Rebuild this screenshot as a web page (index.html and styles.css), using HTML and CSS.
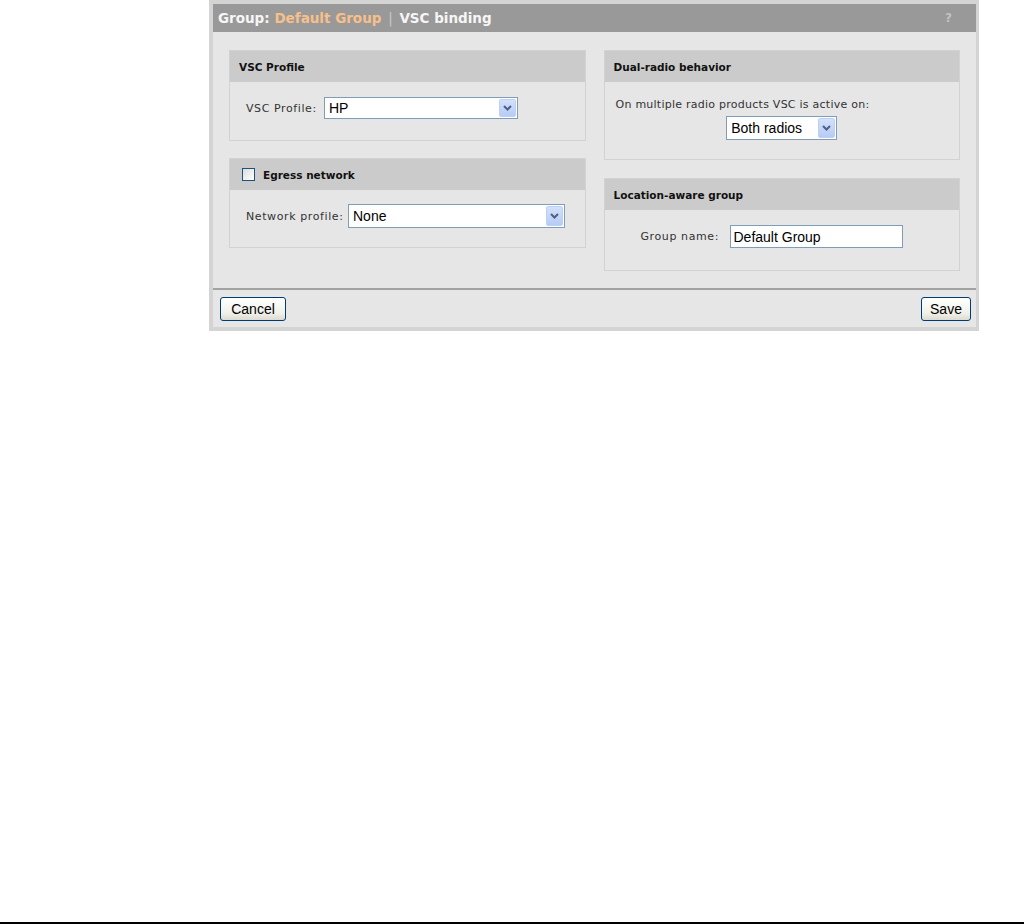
FILE: index.html
```html
<!DOCTYPE html>
<html lang="en">
  <head>
    <meta charset="UTF-8" />
    <title>VSC binding</title>
    <link rel="stylesheet" href="styles.css">
  </head>
  <body>
    <div class="page">
      <div class="panel">
        <div class="titlebar">
          <span class="title">Group: <span class="group">Default Group</span> <span class="sep">|</span> VSC binding</span>
          <span class="help">?</span>
        </div>
        <div class="content">
          <div class="column col_left">
            <div class="box box_vsc">
              <div class="box_head">VSC Profile</div>
              <div class="box_body row">
                <label class="lbl lbl_vsc">VSC Profile:</label>
                <div class="select sel_hp">
                  <span class="sel_text">HP</span>
                  <span class="arrow"><svg width="9" height="6" viewBox="0 0 9 6"><path d="M1 1 L4.5 4.5 L8 1" fill="none" stroke="#4d6185" stroke-width="2"/></svg></span>
                </div>
              </div>
            </div>
            <div class="box box_egress">
              <div class="box_head"><span class="check"></span>Egress network</div>
              <div class="box_body row">
                <label class="lbl lbl_net">Network profile:</label>
                <div class="select sel_none">
                  <span class="sel_text">None</span>
                  <span class="arrow"><svg width="9" height="6" viewBox="0 0 9 6"><path d="M1 1 L4.5 4.5 L8 1" fill="none" stroke="#4d6185" stroke-width="2"/></svg></span>
                </div>
              </div>
            </div>
          </div>
          <div class="column col_right">
            <div class="box box_dual">
              <div class="box_head">Dual-radio behavior</div>
              <div class="box_body">
                <div class="dual_text">On multiple radio products VSC is active on:</div>
                <div class="center">
                  <div class="select sel_both">
                    <span class="sel_text">Both radios</span>
                    <span class="arrow"><svg width="9" height="6" viewBox="0 0 9 6"><path d="M1 1 L4.5 4.5 L8 1" fill="none" stroke="#4d6185" stroke-width="2"/></svg></span>
                  </div>
                </div>
              </div>
            </div>
            <div class="box box_loc">
              <div class="box_head">Location-aware group</div>
              <div class="box_body row">
                <label class="lbl lbl_group">Group name:</label>
                <input type="text" class="text_in" value="Default Group">
              </div>
            </div>
          </div>
        </div>
        <div class="footer">
          <button class="btn btn_cancel">Cancel</button>
          <button class="btn btn_save">Save</button>
        </div>
      </div>
    </div>
    <div class="bottom_line"></div>
  </body>
</html>
```
FILE: styles.css
```css
*{
    margin: 0;
    padding: 0;
    box-sizing: border-box;
}
body{
    width: 1024px;
    height: 924px;
    background: #fff;
    font-family: "DejaVu Sans", Verdana, sans-serif;
    display: flex;
    flex-direction: column;
}
.page{
    flex: 1;
    padding-left: 209px;
}
.panel{
    width: 770px;
    border: 4px solid #d4d4d4;
    border-right-width: 3px;
    background-color: #e6e6e6;
}
.titlebar{
    height: 28px;
    background-color: #999;
    display: flex;
    align-items: center;
    justify-content: space-between;
    padding: 0 24px 0 5px;
    color: #f6f6f6;
    font-weight: bold;
    font-size: 13.5px;
}
.group{
    color: #f7c08a;
}
.sep{
    color: #c8c8c8;
    font-weight: normal;
    padding: 0 2px;
}
.help{
    color: #c2c2c2;
    font-size: 12px;
}
.content{
    display: flex;
    gap: 18px;
    padding: 18px 16px 17px 16px;
}
.column{
    flex: 1;
    display: flex;
    flex-direction: column;
}
.col_left{
    gap: 17px;
}
.col_right{
    gap: 18px;
}
.box{
    border: 1px solid #d2d2d2;
}
.box_head{
    height: 31px;
    background-color: #cbcbcb;
    display: flex;
    align-items: center;
    padding-left: 9px;
    font-size: 10.5px;
    font-weight: bold;
    color: #111;
}
.box_body{
    font-size: 11px;
    color: #333;
}
.row{
    display: flex;
    align-items: center;
}
.lbl{
    letter-spacing: 0.6px;
    flex-shrink: 0;
}
.lbl_vsc{
    width: 78px;
}
.lbl_net{
    width: 102px;
}
.lbl_group{
    width: 89px;
}
.box_vsc .box_body{
    padding: 15px 0 21px 16px;
}
.box_egress .box_body{
    padding: 14px 0 19px 16px;
}
.box_dual .box_body{
    padding: 16px 0 19px 11px;
}
.dual_text{
    line-height: 13px;
    letter-spacing: 0.25px;
}
.center{
    display: flex;
    justify-content: center;
    margin-top: 5px;
    padding-right: 11px;
}
.box_loc .box_body{
    padding: 15px 0 22px 36px;
}
.check{
    width: 13px;
    height: 13px;
    border: 1px solid #1c5180;
    background: linear-gradient(135deg, #dcdcd7, #fff);
    margin: 0 8px 0 3px;
}
.select{
    height: 23px;
    border: 1px solid #7f9db9;
    background: #fff;
    display: flex;
    align-items: stretch;
    justify-content: space-between;
    padding: 1px;
}
.sel_text{
    font-family: "Liberation Sans", Arial, sans-serif;
    font-size: 14px;
    color: #000;
    padding-left: 3px;
    display: flex;
    align-items: center;
}
.arrow{
    width: 17px;
    background: linear-gradient(#d3e0fb, #b7cbf5);
    border: 1px solid #bcd0f7;
    border-radius: 2px;
    display: flex;
    align-items: center;
    justify-content: center;
}
.sel_hp{
    width: 194px;
    height: 22px;
}
.sel_none{
    width: 217px;
    height: 24px;
}
.sel_both{
    width: 111px;
    height: 24px;
}
.text_in{
    width: 173px;
    height: 23px;
    border: 1px solid #7f9db9;
    font-family: "Liberation Sans", Arial, sans-serif;
    font-size: 14px;
    padding-left: 3px;
    color: #000;
    outline: none;
}
.footer{
    border-top: 2px solid #a2a2a2;
    display: flex;
    justify-content: space-between;
    padding: 7px 5px 6px 7px;
}
.btn{
    height: 24px;
    border: 1px solid #003c74;
    border-radius: 3px;
    background: linear-gradient(#fff, #f0f0ea 70%, #dcdad0);
    font-family: "Liberation Sans", Arial, sans-serif;
    font-size: 14px;
    color: #000;
}
.btn_cancel{
    width: 66px;
}
.btn_save{
    width: 50px;
}
.bottom_line{
    height: 2px;
    background: #000;
}
```
